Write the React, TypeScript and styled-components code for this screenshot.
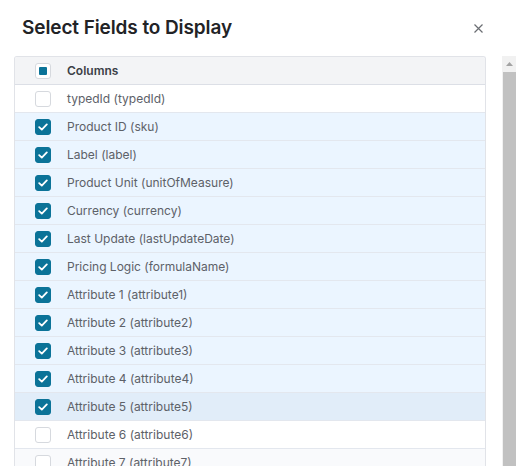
import React from 'react'
import styled, { createGlobalStyle } from 'styled-components'

const GlobalStyle = createGlobalStyle`
  html, body {
    margin: 0;
    padding: 0;
    background: #ffffff;
    overflow: hidden;
  }
  body {
    font-family: Inter, 'Noto Sans', 'Liberation Sans', sans-serif;
  }
`

const Dialog = styled.div`
  width: 516px;
  height: 466px;
  overflow: hidden;
  box-sizing: border-box;
  display: flex;
  flex-direction: column;
`

const Header = styled.div`
  flex-shrink: 0;
  height: 56px;
  display: flex;
  align-items: center;
  justify-content: space-between;
  padding: 0 30px 0 22px;
  box-sizing: border-box;
`

const Title = styled.h2`
  margin: 0;
  margin-top: -2px;
  font-size: 19px;
  font-weight: 600;
  color: #222326;
  letter-spacing: -0.1px;
`

const CloseButton = styled.button`
  border: none;
  background: none;
  padding: 0;
  width: 16px;
  height: 16px;
  display: flex;
  align-items: center;
  justify-content: center;
  cursor: pointer;
  color: #6b6e73;
`

const Body = styled.div`
  flex-shrink: 0;
  display: flex;
  align-items: flex-start;
  padding-left: 14px;
`

const Table = styled.div`
  width: 472px;
  border: 1px solid #e1e3e8;
  border-bottom: none;
  border-radius: 3px 3px 0 0;
  box-sizing: border-box;
  overflow: hidden;
`

const Row = styled.div<{ $bg: string }>`
  height: 28px;
  display: flex;
  align-items: center;
  background: ${(p) => p.$bg};
  border-bottom: 1px solid #e3e7ee;
  box-sizing: border-box;
`

const HeaderRow = styled(Row)`
  height: 28px;
  border-bottom-color: #dcdfe6;
`

const CheckCell = styled.div`
  width: 52px;
  display: flex;
  justify-content: center;
  padding-left: 4px;
  box-sizing: border-box;
`

const Box = styled.span<{ $checked?: boolean }>`
  width: 16px;
  height: 16px;
  box-sizing: border-box;
  border-radius: 3px;
  border: 1px solid ${(p) => (p.$checked ? '#0b7398' : '#d6d9de')};
  background: ${(p) => (p.$checked ? '#0b7398' : '#ffffff')};
  display: flex;
  align-items: center;
  justify-content: center;
`

const Indeterminate = styled.span`
  width: 8px;
  height: 8px;
  background: #0b7398;
  border-radius: 1px;
`

const Label = styled.span<{ $head?: boolean }>`
  font-size: 12px;
  font-weight: ${(p) => (p.$head ? 600 : 400)};
  color: ${(p) => (p.$head ? '#3b3f46' : '#5d6168')};
  white-space: nowrap;
`

const Scrollbar = styled.div`
  margin-left: 16px;
  width: 14px;
  height: 410px;
  background: #f1f1f1;
  display: flex;
  flex-direction: column;
  align-items: center;
`

const ScrollArrow = styled.div`
  height: 16px;
  display: flex;
  align-items: center;
  justify-content: center;
`

const ScrollThumb = styled.div`
  width: 13px;
  margin-left: 1px;
  flex: 1;
  background: #c1c1c1;
`

const fields: { label: string; checked: boolean; hover?: boolean }[] = [
  { label: 'typedId (typedId)', checked: false },
  { label: 'Product ID (sku)', checked: true },
  { label: 'Label (label)', checked: true },
  { label: 'Product Unit (unitOfMeasure)', checked: true },
  { label: 'Currency (currency)', checked: true },
  { label: 'Last Update (lastUpdateDate)', checked: true },
  { label: 'Pricing Logic (formulaName)', checked: true },
  { label: 'Attribute 1 (attribute1)', checked: true },
  { label: 'Attribute 2 (attribute2)', checked: true },
  { label: 'Attribute 3 (attribute3)', checked: true },
  { label: 'Attribute 4 (attribute4)', checked: true },
  { label: 'Attribute 5 (attribute5)', checked: true, hover: true },
  { label: 'Attribute 6 (attribute6)', checked: false },
  { label: 'Attribute 7 (attribute7)', checked: false },
  { label: 'Attribute 8 (attribute8)', checked: false },
]

const rowColor = (f: { checked: boolean; hover?: boolean }, i: number) => {
  if (f.hover) return '#e1edf9'
  if (f.checked) return '#ebf5ff'
  return i % 2 === 0 ? '#ffffff' : '#f9fafc'
}

const Check = () => (
  <svg width="10" height="8" viewBox="0 0 10 8">
    <path d="M1.2 4.2 L3.8 6.6 L8.8 1.4" fill="none" stroke="#fff" strokeWidth="1.8" strokeLinecap="round" strokeLinejoin="round" />
  </svg>
)

const App: React.FC = () => {
  return (
    <>
      <GlobalStyle />
      <Dialog>
        <Header>
          <Title>Select Fields to Display</Title>
          <CloseButton aria-label="Close">
            <svg width="9" height="9" viewBox="0 0 9 9">
              <path d="M0.5 0.5 L8.5 8.5 M8.5 0.5 L0.5 8.5" stroke="currentColor" strokeWidth="1.2" />
            </svg>
          </CloseButton>
        </Header>
        <Body>
          <Table>
            <HeaderRow $bg="#f3f4f6">
              <CheckCell>
                <Box>
                  <Indeterminate />
                </Box>
              </CheckCell>
              <Label $head>Columns</Label>
            </HeaderRow>
            {fields.map((f, i) => (
              <Row key={f.label} $bg={rowColor(f, i)}>
                <CheckCell>
                  <Box $checked={f.checked}>{f.checked && <Check />}</Box>
                </CheckCell>
                <Label>{f.label}</Label>
              </Row>
            ))}
          </Table>
          <Scrollbar>
            <ScrollArrow>
              <svg width="7" height="4" viewBox="0 0 7 4">
                <path d="M0 4 L3.5 0 L7 4 Z" fill="#a3a3a3" />
              </svg>
            </ScrollArrow>
            <ScrollThumb />
          </Scrollbar>
        </Body>
      </Dialog>
    </>
  )
}

export default App
